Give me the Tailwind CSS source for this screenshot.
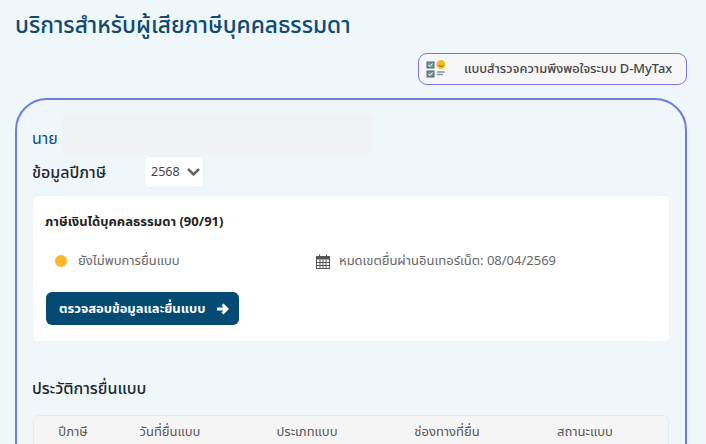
<!DOCTYPE html>
<html lang="th" class="overflow-hidden">
<head>
  <meta charset="UTF-8">
  <meta name="viewport" content="width=device-width, initial-scale=1.0">
  <title>D-MyTax</title>
  <script src="https://cdn.jsdelivr.net/npm/@tailwindcss/browser@4"></script>
</head>
<body class="bg-[#eff7fb] font-['Noto_Sans','Noto_Sans_Thai','DejaVu_Sans',sans-serif] h-[444px] overflow-hidden">
  <div class="pl-[15px] pr-[19px]">
    <h1 class="h-[53px] pt-[9px] text-[22.7px] leading-[32px] font-medium text-[#0f4a73]">บริการสำหรับผู้เสียภาษีบุคคลธรรมดา</h1>

    <div class="flex justify-end">
      <button class="flex items-center w-[269px] h-[32px] pl-[7px] rounded-[9px] border border-[#7c78d8] bg-[#f6f6f8] text-[12.8px] font-medium text-[#444]">
        <svg width="22" height="18" viewBox="0 0 22 18">
          <rect x="1" y="2" width="7" height="6" fill="#6f97a8" stroke="#55666d" />
          <rect x="1" y="11" width="7" height="6" fill="#6f97a8" stroke="#55666d" />
          <path d="M2.500 5l1.500 1.500 2.500-3M2.500 14l1.500 1.500 2.500-3" fill="none" stroke="#fff" />
          <circle cx="15" cy="4.500" r="4.500" fill="#f2bd26" />
          <path d="M12.500 5.500q2.500 2 5 0" fill="none" stroke="#8a6410" />
          <path d="M11 12h8M11 14.500h6" stroke="#8a99a3" stroke-width="1.300" />
        </svg>
        <span class="ml-[16px]">แบบสำรวจความพึงพอใจระบบ D-MyTax</span>
      </button>
    </div>

    <section class="mt-[13px] h-[400px] rounded-[32px] border-2 border-[#6a7fe3] pl-[15px] pr-[16px] pt-[13px]">
      <div class="flex h-[42px]">
        <span class="w-[30px] pt-[14px] text-[16px] leading-[22px] text-[#0f4a73]">นาย</span>
        <div class="w-[310px] rounded-[6px] bg-[#f1f2f3]"></div>
      </div>

      <div class="flex items-center h-[32px] mt-[1px]">
        <span class="w-[113px] text-[16px] font-medium text-[#1d2730]">ข้อมูลปีภาษี</span>
        <div class="flex items-center w-[58px] h-[30px] pl-[6px] rounded-[4px] bg-white shadow-[0_0_2px_rgba(0,0,0,0.08)] text-[12.5px] text-[#444]">
          2568
          <svg class="ml-[6px]" width="15" height="10" viewBox="0 0 15 10"><path d="M2 2l5.500 5.500L13 2" fill="none" stroke="#666" stroke-width="2.600" /></svg>
        </div>
      </div>

      <div class="mt-[8px] ml-[1px] h-[145px] rounded-[4px] bg-white pl-[12px] pt-[15px] shadow-[0_0_2px_rgba(0,0,0,0.05)]">
        <div class="text-[13px] leading-[20px] font-bold text-[#222]">ภาษีเงินได้บุคคลธรรมดา (90/91)</div>
        <div class="flex items-center h-[20px] mt-[20px] text-[13px] text-[#666]">
          <span class="ml-[10px] w-[12px] h-[12px] rounded-full bg-[#fbb62c]"></span>
          <span class="ml-[11px] w-[238px]">ยังไม่พบการยื่นแบบ</span>
          <svg width="14" height="15" viewBox="0 0 14 15" fill="none" stroke="#555">
            <rect x="0.500" y="2.500" width="13" height="12" />
            <path d="M1 3h12v2H1z" fill="#555" />
            <path d="M3.500 0.500v3M10.500 0.500v3M0.500 8.500h13M0.500 11.500h13M4 5.500v9M7 5.500v9M10 5.500v9" />
          </svg>
          <span class="ml-[9px]">หมดเขตยื่นผ่านอินเทอร์เน็ต: 08/04/2569</span>
        </div>
        <button class="flex items-center mt-[21px] ml-[1px] w-[193px] h-[33px] pl-[13px] rounded-[6px] bg-[#054a72] text-white text-[13px] font-bold">
          ตรวจสอบข้อมูลและยื่นแบบ
          <svg class="ml-[10px]" width="13" height="12" viewBox="0 0 13 12"><path d="M1 6h10M6.500 1.500L11 6l-4.500 4.500" fill="none" stroke="#fff" stroke-width="2.800" /></svg>
        </button>
      </div>

      <h2 class="mt-[36px] h-[38px] text-[16px] leading-[22px] font-medium text-[#1d2730]">ประวัติการยื่นแบบ</h2>

      <div class="ml-[1px] grid grid-cols-[78px_116px_158px_122px_154px] h-[40px] pt-[6px] rounded-t-[6px] border border-[#e6ebf0] bg-[#f5f5f5] text-[13px] leading-[18px] text-[#555] text-center">
        <span>ปีภาษี</span>
        <span>วันที่ยื่นแบบ</span>
        <span>ประเภทแบบ</span>
        <span>ช่องทางที่ยื่น</span>
        <span>สถานะแบบ</span>
      </div>
    </section>
  </div>
</body>
</html>
